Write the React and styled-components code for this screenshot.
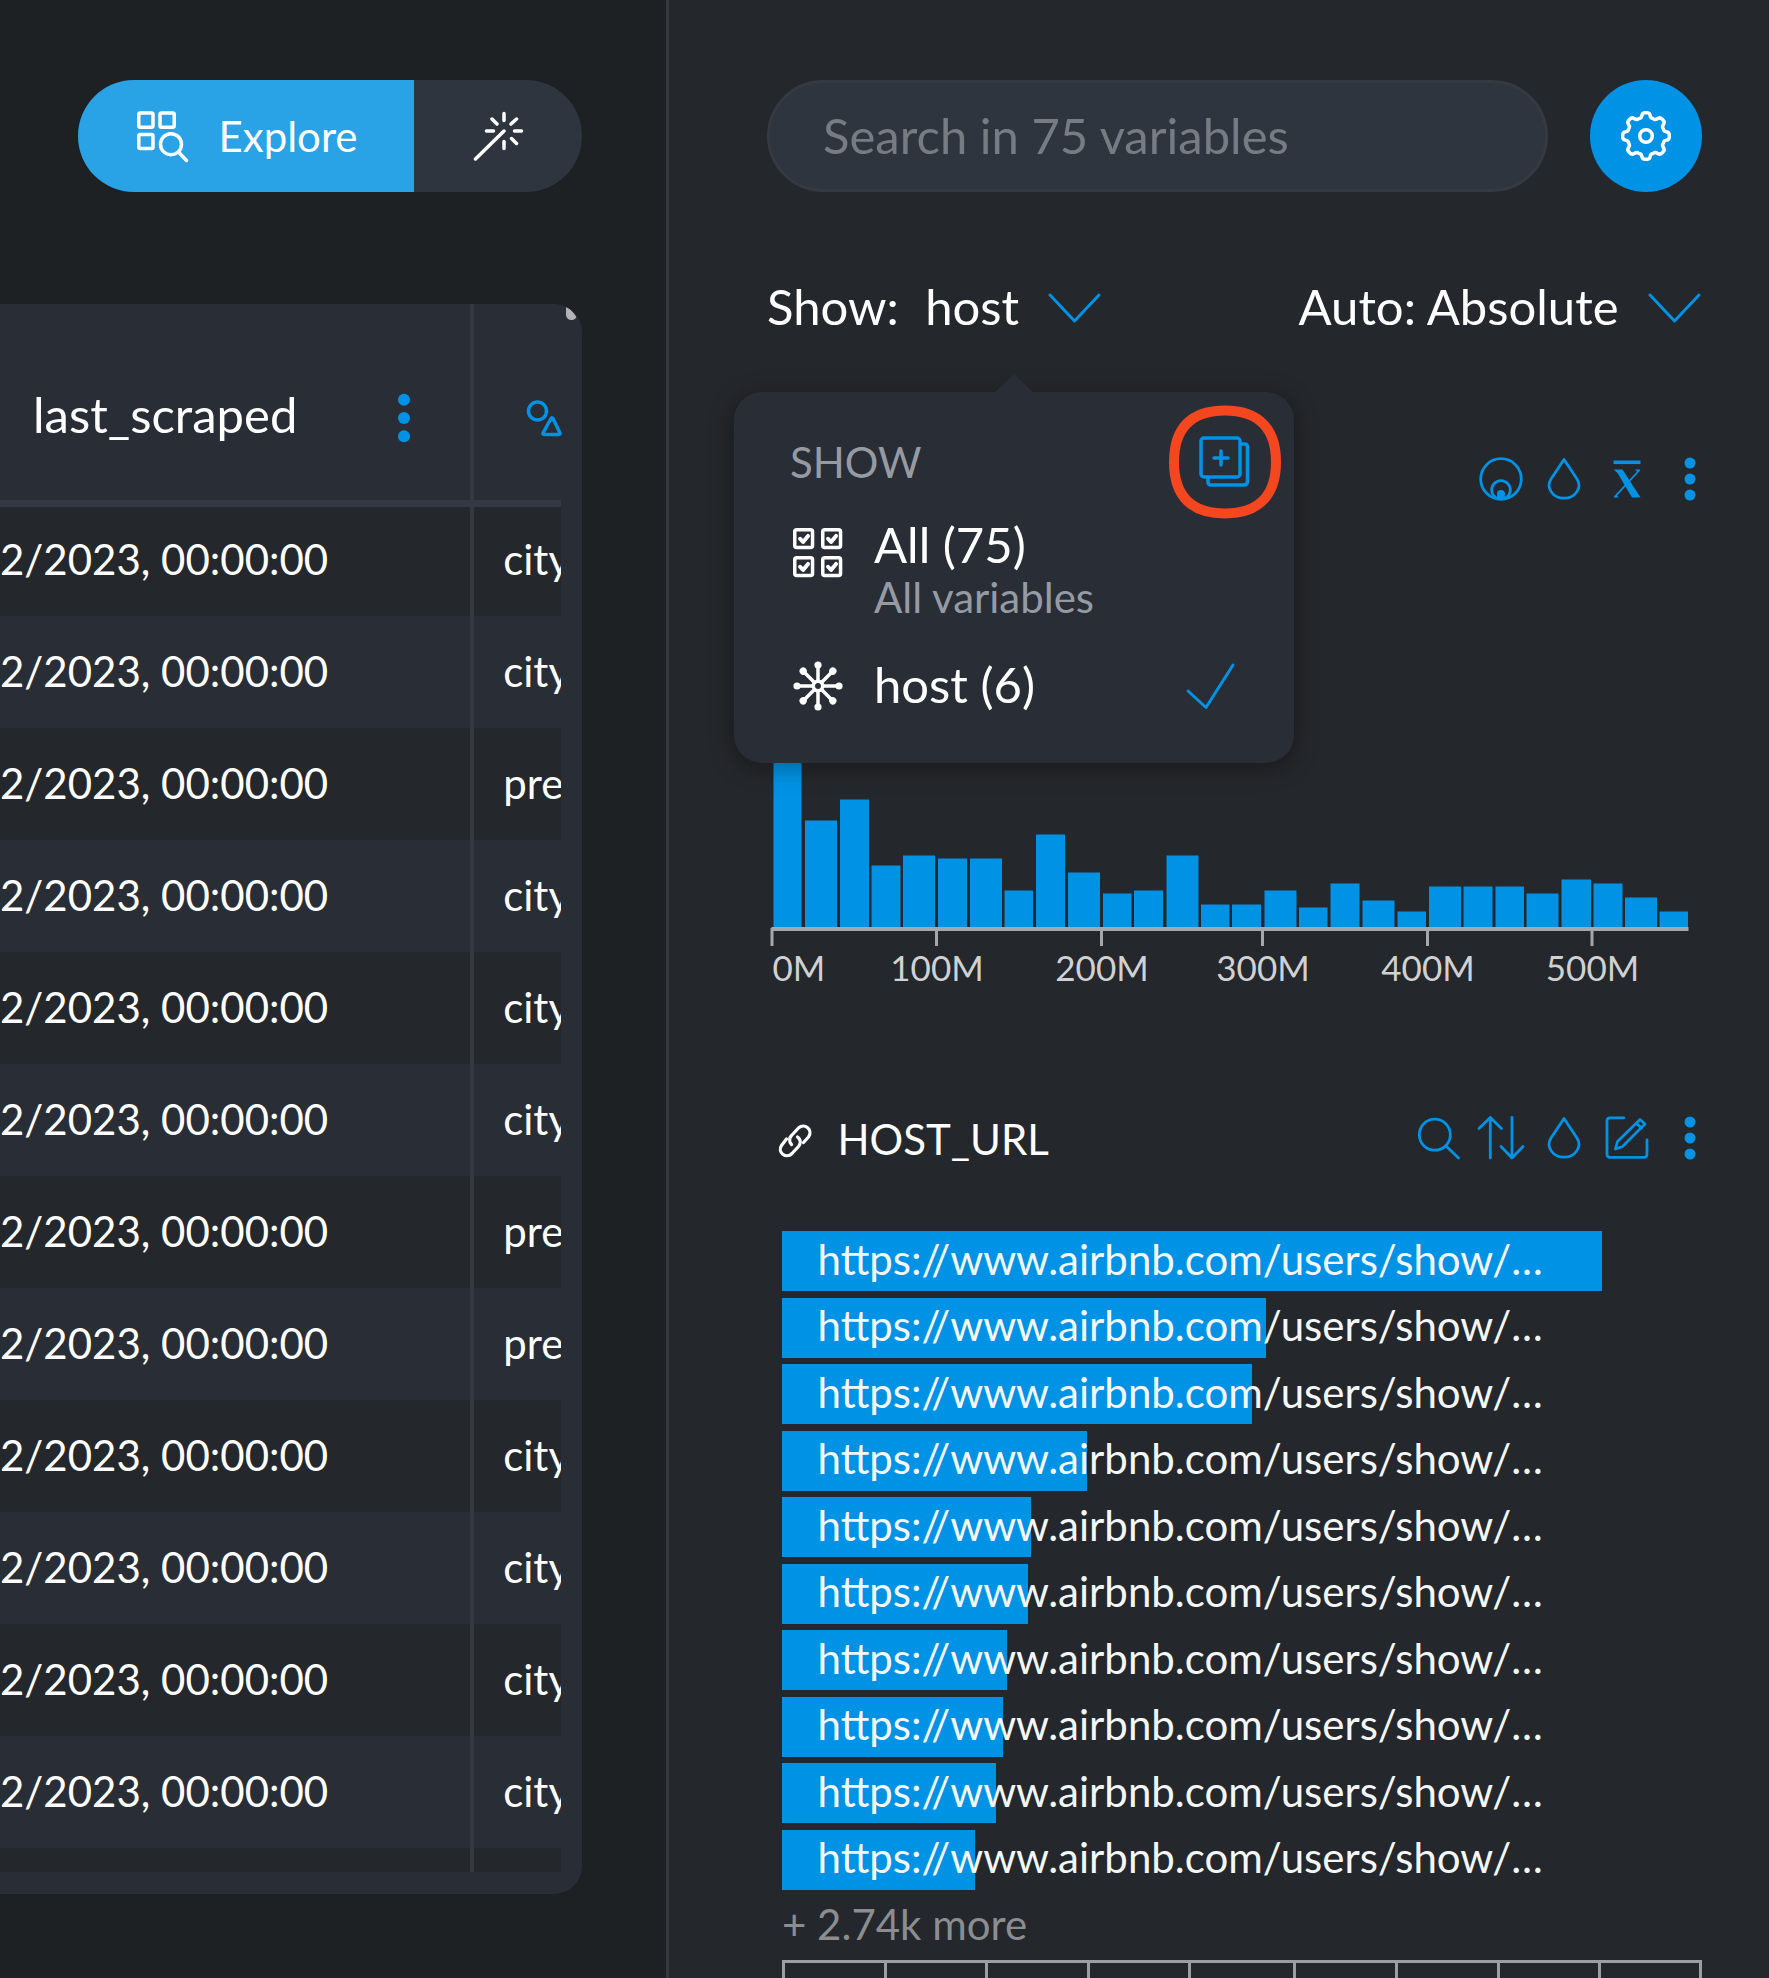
import React from "react";
import styled, { createGlobalStyle } from "styled-components";

const BLUE = "#0092e4";

const GlobalStyle = createGlobalStyle`
  *, *::before, *::after { box-sizing: border-box; }
  body { margin: 0; background: #1e2124; overflow: hidden; }
`;

const Page = styled.div`
  display: flex;
  width: 1769px;
  height: 1978px;
  overflow: hidden;
  background: #1e2124;
  color: #fff;
  font-family: Lato, "Open Sans", sans-serif;
  font-size: 42px;
  white-space: nowrap;
`;

const TablePane = styled.main`
  width: 666px;
  padding-top: 80px;
  display: flex;
  flex-direction: column;
`;

const ModeSwitch = styled.div`
  display: flex;
  flex: none;
  width: 504px;
  height: 112px;
  margin-left: 78px;
  border-radius: 56px;
  overflow: hidden;
  background: #2f353f;
`;

const ModeButton = styled.div`
  flex: ${(p) => (p.$active ? "0 0 336px" : "1")};
  display: flex;
  align-items: center;
  background: ${(p) => (p.$active ? "#29a2e6" : "transparent")};
  padding-left: ${(p) => (p.$active ? "56px" : "58px")};
  gap: 28.5px;
`;

const TableCard = styled.section`
  position: relative;
  flex: none;
  width: 582px;
  height: 1590px;
  margin-top: 112px;
  padding-right: 21.5px;
  border-radius: 0 28px 28px 0;
  overflow: hidden;
  background: #292d35;
`;

const ScrollThumb = styled.div`
  position: absolute;
  right: 5px;
  top: 0;
  width: 11px;
  height: 16px;
  border-radius: 0 0 6px 6px;
  background: #b1b3b6;
  clip-path: path("M0 3 C5 5 8 9 11 14 L11 16 L0 16 Z");
`;

const HeaderRow = styled.div`
  display: flex;
  height: 203px;
  border-bottom: 7px solid #343842;
`;

const HeaderCell = styled.div`
  display: flex;
  align-items: center;
  justify-content: space-between;
  flex: ${(p) => (p.$wide ? "0 0 474px" : "1")};
  border-right: ${(p) => (p.$wide ? "4px solid #343940" : "0")};
  padding: ${(p) => (p.$wide ? "32px 60px 0 33px" : "32px 0 0 52.5px")};
  font-size: 49px;
`;

const HeaderLabel = styled.span`
  padding-bottom: 8px;
`;

const Rows = styled.div`
  height: 1365px;
  overflow: hidden;
`;

const Row = styled.div`
  display: flex;
  height: ${(p) => (p.$first ? "109px" : "112px")};
  padding-bottom: ${(p) => (p.$first ? "5px" : "2px")};
  background: ${(p) => (p.$dark ? "#24272b" : "#292d35")};
`;

const RowsFrame = styled.div`
  display: grid;
  grid-template-columns: 470px 4px 1fr;
  grid-template-rows: 1365px;
  & > ${Rows} { grid-area: 1 / 1 / 2 / 4; }
`;

const ColumnRule = styled.div`
  grid-area: 1 / 2 / 2 / 3;
  z-index: 1;
  background: #343940;
`;

const DateCell = styled.div`
  flex: 0 0 474px;
  display: flex;
  align-items: center;
  justify-content: flex-end;
  padding-right: 148px;
`;

const SourceCell = styled.div`
  flex: 1;
  display: flex;
  align-items: center;
  padding-left: 27px;
  overflow: hidden;
`;

const Sidebar = styled.aside`
  position: relative;
  width: 1103px;
  border-left: 3px solid #353a40;
  background: #24272b;
  padding: 80px 67px 0 98px;
  display: flex;
  flex-direction: column;
  & > * { flex: none; }
`;

const SearchRow = styled.div`
  display: flex;
  justify-content: space-between;
`;

const SearchBox = styled.div`
  display: flex;
  align-items: center;
  width: 781px;
  height: 112px;
  padding: 0 0 3px 53px;
  border: 3px solid #353a42;
  border-radius: 56px;
  background: #2f353f;
  color: #777b82;
  font-size: 49px;
`;

const RoundButton = styled.div`
  display: grid;
  place-items: center;
  width: 112px;
  height: 112px;
  border-radius: 50%;
  background: ${BLUE};
`;

const FilterRow = styled.div`
  display: flex;
  align-items: center;
  justify-content: space-between;
  height: 84px;
  margin-top: 74px;
  padding-right: 1.5px;
  font-size: 49px;
`;

const Select = styled.div`
  display: flex;
  align-items: center;
  gap: 29px;
  & > span { padding-bottom: 4px; }
`;

const SelectLabel = styled.span`
  margin-right: -2.5px;
`;

const VariableHead = styled.div`
  display: flex;
  align-items: center;
  justify-content: space-between;
  height: 60px;
  margin-top: ${(p) => p.$top}px;
`;

const VariableName = styled.div`
  display: flex;
  align-items: center;
  gap: 24.5px;
  padding: 5px 0 0 10px;
  & > span { padding-bottom: 3px; }
`;

const Tools = styled.div`
  display: flex;
  align-items: center;
  gap: 13px;
  margin-left: auto;
  margin-right: -13px;
`;

const Histogram = styled.svg`
  display: block;
  width: 1002px;
  height: 260px;
  margin-top: 217px;
  overflow: visible;
  font-size: 35px;
  fill: #d0d1d2;
`;

const BarList = styled.div`
  display: flex;
  flex-direction: column;
  gap: 6.55px;
  margin-top: 63px;
  padding-left: 15px;
`;

const BarRow = styled.div`
  flex: none;
  display: flex;
  align-items: center;
  height: 60px;
  padding: 0 0 5px 35.5px;
  color: #f4f7f9;
  background: linear-gradient(${BLUE}, ${BLUE}) left / ${(p) => p.$fill}px 100% no-repeat;
`;

const More = styled.div`
  height: 70px;
  line-height: 69px;
  padding-left: 15px;
  color: #8b8d90;
`;

const Scale = styled.div`
  display: flex;
  height: 40px;
  width: 920px;
  margin-left: 15px;
  border: solid #9b9ea2;
  border-width: 3px 3px 0 0;
`;

const ScaleStep = styled.div`
  flex: 0 0 ${(p) => p.$width}px;
  border-left: 3px solid #9b9ea2;
`;

const Menu = styled.div`
  position: absolute;
  left: 65px;
  top: 392px;
  width: 560px;
  height: 371px;
  padding: 36px 14px 0 56px;
  border-radius: 28px;
  background: #292d35;
  box-shadow: 0 4px 24px rgba(0, 0, 0, 0.35);
  &::before {
    content: "";
    position: absolute;
    left: 261px;
    top: -18px;
    border: solid transparent;
    border-width: 0 19px 18px 19px;
    border-bottom-color: #292d35;
  }
`;

const MenuTitle = styled.div`
  display: flex;
  align-items: center;
  height: 68px;
  color: #969aa3;
`;

const Ring = styled.svg`
  position: absolute;
  left: 434px;
  top: 13px;
  width: 115px;
  height: 115px;
`;

const MenuItem = styled.div`
  display: flex;
  align-items: ${(p) => (p.$tall ? "flex-start" : "center")};
  height: ${(p) => (p.$tall ? "130px" : "60px")};
  margin-top: 14px;
  gap: 31px;
  padding: 0 44px 0 3px;
  font-size: 49px;
`;

const ItemIcon = styled.div`
  display: flex;
  margin-top: ${(p) => p.$shift || 0}px;
`;

const ItemText = styled.div`
  flex: 1;
  padding-top: ${(p) => p.$top || 0}px;
  line-height: 59px;
`;

const ItemNote = styled.div`
  line-height: 46px;
  font-size: 42px;
  color: #969aa3;
`;

const IconSvg = styled.svg`
  flex: none;
  display: block;
  overflow: visible;
`;

const Svg = ({ w, h, color = BLUE, sw = 3.5, children }) => (
  <IconSvg width={w} height={h} viewBox={`0 0 ${w} ${h}`} fill="none" stroke={color} strokeWidth={sw}
    strokeLinecap="round" strokeLinejoin="round">
    {children}
  </IconSvg>
);

const Dots = ({ r = 5.5, step = 16, w = 50 }) => (
  <Svg w={w} h={44}>
    {[-1, 0, 1].map((i) => <circle key={i} cx={w / 2} cy={22 + i * step} r={r} fill={BLUE} stroke="none" />)}
  </Svg>
);

const ExploreIcon = () => (
  <Svg w={56} h={56} color="#fff">
    <rect x="4.8" y="5" width="14.200" height="14.200" rx="1.500" />
    <rect x="26" y="5" width="14.200" height="14.200" rx="1.500" />
    <rect x="4.8" y="26.400" width="14.200" height="14.200" rx="1.500" />
    <circle cx="37" cy="36.200" r="10.500" />
    <path d="M44.500 44l8 8.500" />
  </Svg>
);

const WandIcon = () => (
  <Svg w={54} h={54} color="#fff">
    <path d="M3.500 50L32 22M32 4.500v7M32 32.500v7M14.500 22h7M42.500 22h7M20 10l5 5M44.500 10l-5.500 5M39.500 29.500l5 5" />
  </Svg>
);

const gearPath = (() => {
  const pts = [];
  for (let i = 0; i <= 160; i++) {
    const a = (i / 160) * Math.PI * 2;
    const wave = Math.tanh(2.4 * Math.cos(8 * a)) / Math.tanh(2.4);
    const r = 21 + 2.3 * wave;
    pts.push(`${(26 + r * Math.sin(a)).toFixed(2)} ${(26 - r * Math.cos(a)).toFixed(2)}`);
  }
  return "M" + pts.join("L") + "Z";
})();

const GearIcon = () => (
  <Svg w={52} h={52} color="#fff"><path d={gearPath} /><circle cx="26" cy="26" r="6.300" /></Svg>
);

const Chevron = () => <Svg w={53} h={30} sw={3}><path d="M2 2l24.500 26L51 2" /></Svg>;

const TypeIcon = () => (
  <Svg w={35} h={37}>
    <circle cx="10.500" cy="11" r="9" />
    <path d="M24 18.500q1-1.500 2 0l7 14.500q.5 1.500-1 1.500H17q-1.500 0-1-1.500z" />
  </Svg>
);

const Droplet = () => (
  <Svg w={50} h={50} sw={2.8}>
    <path d="M25 5.500L12 25C6.500 34 14 44.200 25 44.200S43.500 34 38 25z" />
  </Svg>
);

const DonutIcon = () => (
  <Svg w={50} h={50} sw={2.8}>
    <circle cx="25" cy="25" r="20.300" />
    <path d="M19.500 43.500a9.300 9.300 0 1 1 11 0" />
    <circle cx="25" cy="40" r="4" fill={BLUE} stroke="none" />
    <path d="M21 42h8l1 3H20z" fill={BLUE} stroke="none" />
  </Svg>
);

const MeanIcon = () => (
  <Svg w={50} h={50}>
    <path d="M11.500 8.300h27" strokeWidth="3.600" strokeLinecap="butt" />
    <path d="M11.500 15.500H20.500L38.500 43.500H30L15.500 19z" fill={BLUE} stroke="none" />
    <path d="M37.500 16L12.500 43.200" strokeWidth="1.800" strokeLinecap="butt" />
    <path d="M33 15.500h5.500l-3 2.500zM11.500 43.500H17l-2.500-2.500z" fill={BLUE} stroke="none" />
  </Svg>
);

const SearchIcon = () => (
  <Svg w={50} h={50} sw={2.8}><circle cx="21.800" cy="21.700" r="15.500" /><path d="M33 33L45.500 45" /></Svg>
);

const SortIcon = () => (
  <Svg w={50} h={50} sw={2.8}><path d="M14.300 45V4.500M3 15.500L14.300 4.500L25.500 15.500M36 4.500V45M25 33.500L36 45l11-11.500" /></Svg>
);

const EditIcon = () => (
  <Svg w={50} h={50} sw={2.8}>
    <path d="M22 4.800H8q-3 0-3 3v33.500q0 3 3 3h34q3 0 3-3V27" />
    <path d="M38 6.500l5 4.500L20.500 33.500L13.500 36L15.500 28.500zM34.500 10.500l5 4.500" />
  </Svg>
);

const LinkIcon = () => (
  <Svg w={36} h={36} color="#fff" sw={3.2}>
    <path d="M14.500 21.500c-3-3-2-7 0-9l7-7.500c6-5.500 15 2 10 9l-5 5.500" />
    <path d="M20.500 14c4 3 3 7 1 9.500l-6.500 7c-6 6-15-1.500-10.500-8l5-6.500" />
  </Svg>
);

const AddGroupIcon = () => (
  <>
    <rect x="33" y="33" width="39" height="39" rx="3" stroke={BLUE} strokeWidth="3.500" />
    <path d="M73 39h3.500q3 0 3 3v34q0 4-4 4H43q-3 0-3-3v-4M53 46v14M46 53h14" stroke={BLUE} strokeWidth="3.500" strokeLinecap="round" />
  </>
);

const AllIcon = () => (
  <Svg w={50} h={50} color="#fff">
    {[[1.75, 1.75], [29.75, 1.75], [1.75, 29.75], [29.75, 29.75]].map(([x, y]) => (
      <g key={`${x}-${y}`}>
        <rect x={x} y={y} width="17.800" height="17.800" rx="2" />
        <path d={`M${x + 5.3} ${y + 9}l3 3.200l5-6`} strokeWidth="4" />
      </g>
    ))}
  </Svg>
);

const HubIcon = () => (
  <Svg w={50} h={50} color="#fff">
    <circle cx="25" cy="25" r="4.700" />
    {Array.from({ length: 8 }, (_, i) => (
      <g key={i} transform={`rotate(${i * 45} 25 25)`}>
        <path d="M25 20V6" /><circle cx="25" cy="4" r="3.600" fill="#fff" stroke="none" />
      </g>
    ))}
  </Svg>
);

const CheckIcon = () => <Svg w={50} h={46} sw={3}><path d="M2 28l18 16.500L47 2" /></Svg>;

const sources = ["city", "city", "pre", "city", "city", "city", "pre", "pre", "city", "city", "city", "city", ""];

// x, width, height of each bin, with the first tick at x = 5
const bins = [
  [6.5, 28, 170], [38, 32, 106], [73, 29, 127], [104.500, 29, 61], [136, 32, 71], [171, 29, 68],
  [203, 32, 68], [237.500, 28.500, 36], [269, 29, 92], [301, 32, 54], [336, 28.500, 33], [367, 29, 36],
  [399.500, 32, 71], [434, 28.500, 22], [465, 29, 22], [497.500, 32, 36], [532, 28.500, 19], [563.500, 29, 43],
  [595.500, 32, 26], [630.500, 28.500, 15], [662, 32, 40], [696.500, 29, 40], [728.500, 28.500, 40], [759.500, 32, 33],
  [794.500, 29.500, 47], [826.500, 29, 43], [858, 32, 29], [892.500, 28.500, 15],
];
const ticks = [[5, "0M"], [169.500, "100M"], [334.500, "200M"], [495.500, "300M"], [660.500, "400M"], [825, "500M"]];

const urlBars = [820, 484, 470, 305, 249, 246, 225, 221, 214, 193];
const scaleSteps = [102, 101, 102, 101, 105, 102, 102, 101, 101];

export default function App() {
  return (
    <Page>
      <GlobalStyle />
      <TablePane>
        <ModeSwitch>
          <ModeButton $active><ExploreIcon /><span>Explore</span></ModeButton>
          <ModeButton><WandIcon /></ModeButton>
        </ModeSwitch>
        <TableCard>
          <HeaderRow>
            <HeaderCell $wide><HeaderLabel>last_scraped</HeaderLabel><Dots r={6} step={18.3} w={12} /></HeaderCell>
            <HeaderCell><TypeIcon /></HeaderCell>
          </HeaderRow>
          <RowsFrame>
            <Rows>
              {sources.map((s, i) => (
                <Row key={i} $first={i === 0} $dark={i % 2 === 0}>
                  <DateCell>{s && "2/2023, 00:00:00"}</DateCell>
                  <SourceCell>{s}</SourceCell>
                </Row>
              ))}
            </Rows>
            <ColumnRule />
          </RowsFrame>
          <ScrollThumb />
        </TableCard>
      </TablePane>
      <Sidebar>
        <SearchRow>
          <SearchBox>Search in 75 variables</SearchBox>
          <RoundButton><GearIcon /></RoundButton>
        </SearchRow>
        <FilterRow>
          <Select><SelectLabel>Show:</SelectLabel><span>host</span><Chevron /></Select>
          <Select><span>Auto: Absolute</span><Chevron /></Select>
        </FilterRow>
        <VariableHead $top={99}>
          <Tools><DonutIcon /><Droplet /><MeanIcon /><Dots /></Tools>
        </VariableHead>
        <Histogram viewBox="0 0 1002 260">
          {bins.map(([x, w, h]) => <rect key={x} x={x} y={200.5 - h} width={w} height={h + 0.5} fill={BLUE} />)}
          <rect x="4.5" y="201" width="917" height="4" fill="#a3a8ad" />
          {ticks.map(([x, label], i) => (
            <g key={label}>
              <rect x={x - 1.5} y="202" width="3" height="18" fill="#a3a8ad" />
              <text x={x + 0.5} y="255" textAnchor={i ? "middle" : "start"}>{label}</text>
            </g>
          ))}
        </Histogram>
        <VariableHead $top={122}>
          <VariableName><LinkIcon /><span>HOST_URL</span></VariableName>
          <Tools><SearchIcon /><SortIcon /><Droplet /><EditIcon /><Dots /></Tools>
        </VariableHead>
        <BarList>
          {urlBars.map((fill, i) => <BarRow key={i} $fill={fill}>https://www.airbnb.com/users/show/…</BarRow>)}
        </BarList>
        <More>+ 2.74k more</More>
        <Scale>{scaleSteps.map((w, i) => <ScaleStep key={i} $width={w} />)}</Scale>
        <Menu>
          <MenuTitle>SHOW</MenuTitle>
          <Ring viewBox="0 0 115 115" fill="none">
            <path d="M57 5.500C91 5.500 108 24 108 57S91 108.500 57 108.500S6 91 6 57S23 5.500 57 5.500z" stroke="#f4471f" strokeWidth="10" />
            <AddGroupIcon />
          </Ring>
          <MenuItem $tall>
            <ItemIcon $shift={18}><AllIcon /></ItemIcon>
            <ItemText $top={5}>All (75)<ItemNote>All variables</ItemNote></ItemText>
          </MenuItem>
          <MenuItem>
            <ItemIcon $shift={4}><HubIcon /></ItemIcon>
            <ItemText>host (6)</ItemText>
            <ItemIcon $shift={4}><CheckIcon /></ItemIcon>
          </MenuItem>
        </Menu>
      </Sidebar>
    </Page>
  );
}
